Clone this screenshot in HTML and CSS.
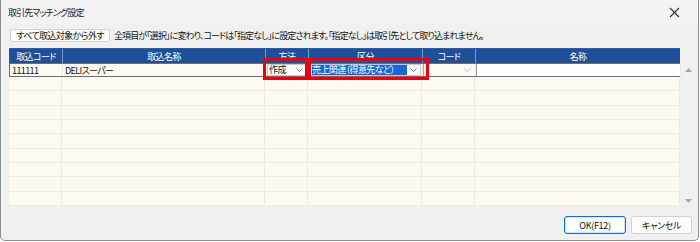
FILE: index.html
```html
<!DOCTYPE html>
<html lang="ja">
<head>
    <meta charset="UTF-8">
    <title>取引先マッチング設定</title>
    <link rel="stylesheet" href="styles.css">
</head>
<body>

<div class="window">
    <div class="titlebar">
        <span class="title">取引先マッチング設定</span>
        <svg class="close" width="11" height="11" viewBox="0 0 11 11">
            <path d="M1 1 L10 10 M10 1 L1 10" stroke="#333" stroke-width="1.1" fill="none"/>
        </svg>
    </div>

    <div class="toolbar">
        <button type="button" class="btn-clear">すべて取込対象から外す</button>
        <span class="note">全項目が「選択」に変わり、コードは「指定なし」に設定されます。「指定なし」は取引先として取り込まれません。</span>
    </div>

    <div class="grid-area">
        <div class="grid">
            <div class="row head">
                <div class="cell">取込コード</div>
                <div class="cell">取込名称</div>
                <div class="cell">方法</div>
                <div class="cell">区分</div>
                <div class="cell">コード</div>
                <div class="cell">名称</div>
            </div>

            <div class="row active">
                <div class="cell text">111111</div>
                <div class="cell text">DELIスーパー</div>
                <div class="cell">
                    <div class="combo">
                        <span class="combo-text">作成</span>
                        <svg class="chev" width="7" height="4" viewBox="0 0 7 4"><path d="M0.5 0.5 L3.5 3.5 L6.5 0.5" stroke="#777" fill="none"/></svg>
                    </div>
                </div>
                <div class="cell">
                    <div class="combo">
                        <span class="combo-text selected">売上関連（得意先など）</span>
                        <svg class="chev" width="7" height="4" viewBox="0 0 7 4"><path d="M0.5 0.5 L3.5 3.5 L6.5 0.5" stroke="#777" fill="none"/></svg>
                    </div>
                </div>
                <div class="cell code-cell">
                    <svg class="chev faint" width="7" height="4" viewBox="0 0 7 4"><path d="M0.5 0.5 L3.5 3.5 L6.5 0.5" stroke="#bbb" fill="none"/></svg>
                </div>
                <div class="cell">
                    <div class="edit"></div>
                </div>
            </div>

            <div class="body">
                <div class="row"><div class="cell"></div><div class="cell"></div><div class="cell"></div><div class="cell"></div><div class="cell"></div><div class="cell"></div></div>
                <div class="row"><div class="cell"></div><div class="cell"></div><div class="cell"></div><div class="cell"></div><div class="cell"></div><div class="cell"></div></div>
                <div class="row"><div class="cell"></div><div class="cell"></div><div class="cell"></div><div class="cell"></div><div class="cell"></div><div class="cell"></div></div>
                <div class="row"><div class="cell"></div><div class="cell"></div><div class="cell"></div><div class="cell"></div><div class="cell"></div><div class="cell"></div></div>
                <div class="row"><div class="cell"></div><div class="cell"></div><div class="cell"></div><div class="cell"></div><div class="cell"></div><div class="cell"></div></div>
                <div class="row"><div class="cell"></div><div class="cell"></div><div class="cell"></div><div class="cell"></div><div class="cell"></div><div class="cell"></div></div>
                <div class="row"><div class="cell"></div><div class="cell"></div><div class="cell"></div><div class="cell"></div><div class="cell"></div><div class="cell"></div></div>
                <div class="row"><div class="cell"></div><div class="cell"></div><div class="cell"></div><div class="cell"></div><div class="cell"></div><div class="cell"></div></div>
                <div class="row"><div class="cell"></div><div class="cell"></div><div class="cell"></div><div class="cell"></div><div class="cell"></div><div class="cell"></div></div>
            </div>
        </div>

        <div class="scrollbar">
            <svg width="7" height="4" viewBox="0 0 7 4"><path d="M0 4 L3.5 0 L7 4 Z" fill="#a8a8a8"/></svg>
            <svg width="7" height="4" viewBox="0 0 7 4"><path d="M0 0 L3.5 4 L7 0 Z" fill="#a8a8a8"/></svg>
        </div>

        <!-- red annotation boxes -->
        <div class="mark mark-method"></div>
        <div class="mark mark-kind"></div>
    </div>

    <div class="footer">
        <button type="button" class="btn ok">OK(F12)</button>
        <button type="button" class="btn">キャンセル</button>
    </div>
</div>

</body>
</html>
```

FILE: styles.css
```css
body {
    margin: 0;
    background-color: #fff;
    font-family: 'Noto Sans CJK JP', 'Noto Sans', sans-serif;
    font-size: 9px;
    letter-spacing: -0.6px;
    font-feature-settings: "palt";
    color: #111;
}

.window {
    width: 697px;
    height: 240px;
    background-color: #f0f0f0;
    border: 1px solid #8c8c8c;
    border-top: none;
    border-radius: 0 0 5px 5px;
    display: flex;
    flex-direction: column;
}

.titlebar {
    height: 24px;
    display: flex;
    align-items: center;
    justify-content: space-between;
    padding: 0 18px 0 7px;
    background-color: #f3f3f3;
}

.title {
    font-size: 9px;
    letter-spacing: -0.9px;
    color: #222;
}

.toolbar {
    display: flex;
    align-items: center;
    gap: 4px;
    padding: 5px 0 0 9px;
    height: 13px;
}

.btn-clear {
    font-family: inherit;
    font-size: 9px;
    letter-spacing: -0.6px;
    font-feature-settings: "palt";
    white-space: nowrap;
    width: 100px;
    height: 13px;
    padding: 0;
    line-height: 11px;
    background-color: #fdfdfd;
    border: 1px solid #d3d3d3;
    border-radius: 2px;
    color: #111;
}

.note {
    white-space: nowrap;
    letter-spacing: -0.9px;
}

.grid-area {
    position: relative;
    display: flex;
    margin: 6px 1px 0 8px;
    height: 158px;
}

.grid {
    width: 671px;
    display: flex;
    flex-direction: column;
    background-color: #fffaf1;
}

.row {
    display: grid;
    grid-template-columns: 53px 203px 43px 114px 53px 205px;
}

.head {
    height: 15px;
    background-color: #1f4f98;
    color: #fff;
    border-top: 1px solid #2c5ea6;
    box-sizing: border-box;
}

.head .cell {
    display: flex;
    align-items: center;
    justify-content: center;
    border-left: 1px solid #7d9ccc;
    line-height: 1;
}

.head .cell:first-child {
    border-left: 1px solid #2a5aa0;
}

.active {
    height: 14px;
    box-sizing: border-box;
    border: 1px solid #6e6e6e;
    border-right: 1px solid #8a8a8a;
}

.active .cell {
    display: flex;
    align-items: center;
    border-right: 1px solid #ece7de;
    white-space: nowrap;
}

.active .text {
    padding-left: 2px;
    line-height: 1;
}

.combo {
    flex: 1;
    height: 12px;
    margin: 0 1px;
    background-color: #fff;
    border: 1px solid #c8c8c8;
    box-sizing: border-box;
    display: flex;
    align-items: center;
    justify-content: space-between;
    padding: 0 3px 0 1px;
}

.combo-text {
    line-height: 10px;
}

.combo-text.selected {
    background-color: #1468d8;
    color: #fff;
    padding-right: 12px;
}

.code-cell {
    justify-content: flex-end;
    padding-right: 4px;
    border-left: 1px solid #e89a3c;
}

.edit {
    flex: 1;
    height: 12px;
    background-color: #fff;
    border-left: 1px solid #9c9c9c;
}

.body {
    flex: 1;
    display: flex;
    flex-direction: column;
}

.body .row {
    flex: 1;
    border-bottom: 1px solid #f0ece5;
}

.body .cell {
    border-right: 1px solid #f0ece5;
}

.scrollbar {
    width: 16px;
    height: 143px;
    margin-top: 15px;
    display: flex;
    flex-direction: column;
    align-items: center;
    justify-content: space-between;
    padding: 5px 0 3px;
    box-sizing: border-box;
}

.mark {
    position: absolute;
    top: 10px;
    height: 22px;
    border: 3px solid #e8000f;
    box-sizing: border-box;
}

.mark-method {
    left: 254px;
    width: 45px;
}

.mark-kind {
    left: 299px;
    width: 121px;
}

.footer {
    display: flex;
    justify-content: flex-end;
    gap: 5px;
    padding: 10px 6px 0 0;
}

.btn {
    font-family: inherit;
    font-size: 9px;
    letter-spacing: -0.3px;
    font-feature-settings: "palt";
    width: 61px;
    height: 18px;
    padding: 0;
    background-color: #fdfdfd;
    border: 1px solid #d0d0d0;
    border-radius: 3px;
    color: #111;
}

.btn.ok {
    width: 62px;
    border: 1px solid #0a6fd0;
    box-shadow: inset 0 0 0 1px #cfe2f6;
}
```
